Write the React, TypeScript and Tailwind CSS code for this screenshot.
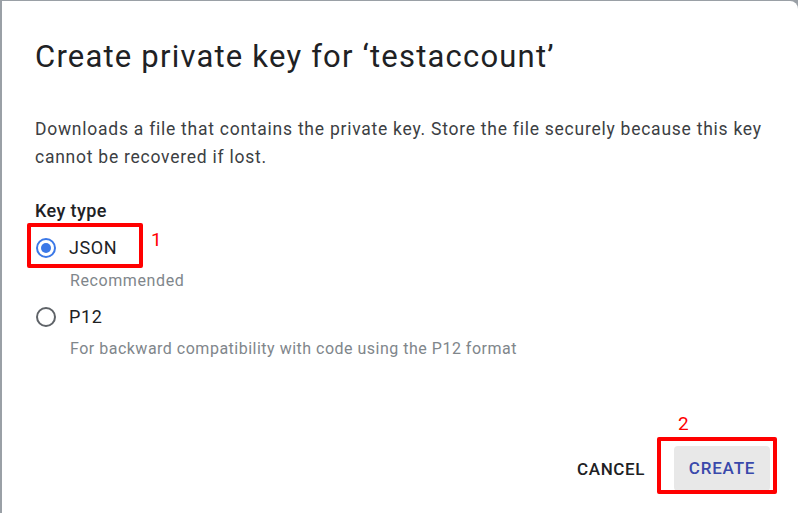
const Radio = ({ checked }: { checked?: boolean }) => (
  <span
    className={`flex h-[20px] w-[20px] items-center justify-center rounded-full border-2 ${
      checked ? "border-[#3b78e7]" : "border-[#5f6368]"
    }`}
  >
    {checked && <span className="h-[10px] w-[10px] rounded-full bg-[#3b78e7]" />}
  </span>
);

export default function App() {
  return (
    <div className="h-[513px] w-[798px] overflow-hidden bg-[#9aa0a6] font-['Roboto',sans-serif]">
      <div className="ml-[2px] mt-[1px] flex h-[512px] flex-col rounded-tr-[8px] bg-white pl-[33px] pr-[20px] text-[#202124]">
        <h1 className="mt-[38px] text-[31px] leading-[36px] font-normal tracking-[1.2px]">
          Create private key for ‘testaccount’
        </h1>
        <p className="mt-[40px] text-[17.5px] leading-[28px] tracking-[0.75px] text-[#3c4043]">
          Downloads a file that contains the private key. Store the file securely because this key
          <br />
          cannot be recovered if lost.
        </p>
        <div className="mt-[28px] text-[18px] leading-[24px] font-medium tracking-[0.4px]">Key type</div>

        <div className="relative mt-[13px] flex w-fit items-center gap-[13px] pl-[1px]">
          <Radio checked />
          <span className="text-[18px] leading-[24px] tracking-[0.6px]">JSON</span>
          <div className="absolute left-[-8px] top-[-13px] h-[45px] w-[116px] rounded-[2px] border-4 border-[#ff0000]" />
          <span className="absolute left-[116px] top-[-10px] text-[19px] text-[#ff0000]">1</span>
        </div>
        <div className="ml-[35px] mt-[9px] text-[16px] leading-[24px] tracking-[0.6px] text-[#80868b]">Recommended</div>

        <div className="mt-[12px] flex items-center gap-[13px] pl-[1px]">
          <Radio />
          <span className="text-[18px] leading-[24px] tracking-[0.6px]">P12</span>
        </div>
        <div className="ml-[35px] mt-[8px] text-[16px] leading-[24px] tracking-[0.5px] text-[#80868b]">
          For backward compatibility with code using the P12 format
        </div>

        <div className="mt-auto mb-[22px] mr-[8px] flex items-center justify-end gap-[29px]">
          <button className="text-[17px] leading-[24px] font-medium uppercase tracking-[0.6px] text-[#202124]">
            Cancel
          </button>
          <div className="relative">
            <button className="h-[45px] w-[96px] rounded-[4px] bg-[#e8e8e8] text-[17px] font-medium uppercase tracking-[0.8px] text-[#3949ab]">
              Create
            </button>
            <div className="absolute left-[-17px] top-[-9px] h-[57px] w-[120px] rounded-[2px] border-4 border-[#ff0000]" />
            <span className="absolute left-[4px] top-[-36px] text-[19px] text-[#ff0000]">2</span>
          </div>
        </div>
      </div>
    </div>
  );
}
